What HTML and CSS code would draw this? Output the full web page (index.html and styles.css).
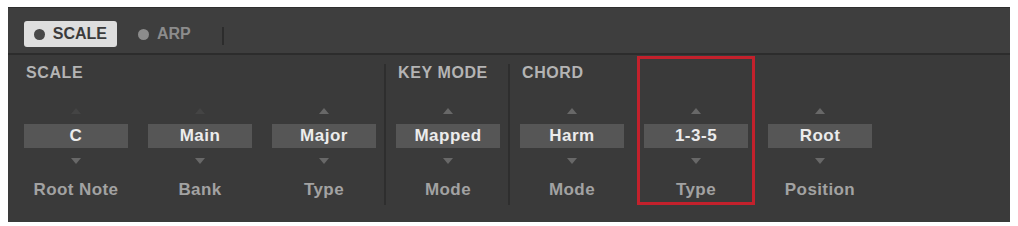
FILE: index.html
```html
<!DOCTYPE html>
<html lang="en">
<head>
  <meta charset="UTF-8" />
  <title>Scale / Arp</title>
  <link rel="stylesheet" href="styles.css">
</head>
<body>

  <div class="panel">
    <!-- tabs -->
    <div class="tabs">
      <div class="tab active"><span class="dot"></span>SCALE</div>
      <div class="tab"><span class="dot"></span>ARP</div>
      <div class="tab-sep"></div>
    </div>

    <div class="params">
      <div class="section">
        <div class="section-title">SCALE</div>
        <div class="cols">
          <div class="col">
            <div class="arrow-up off"></div>
            <div class="value">C</div>
            <div class="arrow-down"></div>
            <div class="label">Root Note</div>
          </div>
          <div class="col">
            <div class="arrow-up off"></div>
            <div class="value">Main</div>
            <div class="arrow-down"></div>
            <div class="label">Bank</div>
          </div>
          <div class="col">
            <div class="arrow-up"></div>
            <div class="value">Major</div>
            <div class="arrow-down"></div>
            <div class="label">Type</div>
          </div>
        </div>
      </div>

      <div class="section">
        <div class="section-title">KEY MODE</div>
        <div class="cols">
          <div class="col">
            <div class="arrow-up"></div>
            <div class="value">Mapped</div>
            <div class="arrow-down"></div>
            <div class="label">Mode</div>
          </div>
        </div>
      </div>

      <div class="section">
        <div class="section-title">CHORD</div>
        <div class="cols">
          <div class="col">
            <div class="arrow-up"></div>
            <div class="value">Harm</div>
            <div class="arrow-down"></div>
            <div class="label">Mode</div>
          </div>
          <div class="col marked">
            <div class="arrow-up"></div>
            <div class="value">1-3-5</div>
            <div class="arrow-down"></div>
            <div class="label">Type</div>
          </div>
          <div class="col">
            <div class="arrow-up"></div>
            <div class="value">Root</div>
            <div class="arrow-down"></div>
            <div class="label">Position</div>
          </div>
        </div>
      </div>
    </div>
  </div>

</body>
</html>
```

FILE: styles.css
```css
body {
  margin: 0;
  background: #fff;
  font-family: "Liberation Sans", Arial, sans-serif;
}

.panel {
  margin: 7px 0 0 8px;
  width: 1002px;
  height: 215px;
  background: #3a3a3a;
  box-sizing: border-box;
  border-top: 1px solid #2e2e2e;
}

/* tab bar */
.tabs {
  height: 47px;
  padding: 13px 0 0 16px;
  box-sizing: border-box;
  display: flex;
  align-items: flex-start;
  background: #3e3e3e;
  border-bottom: 2px solid #2c2c2c;
}

.tab {
  height: 26px;
  display: flex;
  align-items: center;
  padding: 0 10px 0 10px;
  margin-right: 11px;
  border-radius: 3px;
  font-size: 16px;
  font-weight: bold;
  color: #8c8c8c;
}

.tab.active {
  width: 93px;
  box-sizing: border-box;
  background: #dedede;
  color: #3b3b3b;
}

.tab:last-of-type {
  margin-right: 4px;
}

.dot {
  width: 11px;
  height: 11px;
  border-radius: 50%;
  background: #8c8c8c;
  margin-right: 8px;
}

.tab.active .dot {
  background: #474747;
}

.tab-sep {
  width: 2px;
  height: 18px;
  margin: 6px 0 0 10px;
  background: #2c2c2c;
}

/* parameters */
.params {
  display: flex;
  padding: 9px 0 0 6px;
}

.section {
  padding: 1px 0 6px 0;
}

.section + .section {
  border-left: 2px solid #2e2e2e;
  margin-left: -2px;
}

.section-title {
  height: 16px;
  line-height: 16px;
  padding-left: 12px;
  font-size: 16px;
  font-weight: bold;
  letter-spacing: 0.6px;
  color: #b4b4b4;
}

.cols {
  display: flex;
}

.col {
  width: 124px;
  display: flex;
  flex-direction: column;
  align-items: center;
  position: relative;
}

.arrow-up,
.arrow-down {
  width: 0;
  height: 0;
  border-left: 5px solid transparent;
  border-right: 5px solid transparent;
}

.arrow-up {
  margin: 27px 0 10px;
  border-bottom: 6px solid #686868;
}

.arrow-up.off {
  border-bottom-color: #444;
}

.arrow-down {
  margin: 10px 0 10px;
  border-top: 6px solid #686868;
}

.value {
  width: 104px;
  height: 24px;
  line-height: 24px;
  text-align: center;
  background: #565656;
  color: #ececec;
  font-size: 17px;
  font-weight: bold;
  letter-spacing: 0.5px;
}

.label {
  margin-top: 7px;
  height: 18px;
  line-height: 18px;
  font-size: 17px;
  font-weight: bold;
  letter-spacing: 0.4px;
  color: #a2a2a2;
}

/* red annotation frame */
.marked::after {
  content: "";
  position: absolute;
  top: -25px;
  bottom: -6px;
  left: 3px;
  right: 3px;
  border: 3px solid #c3212c;
}
```
